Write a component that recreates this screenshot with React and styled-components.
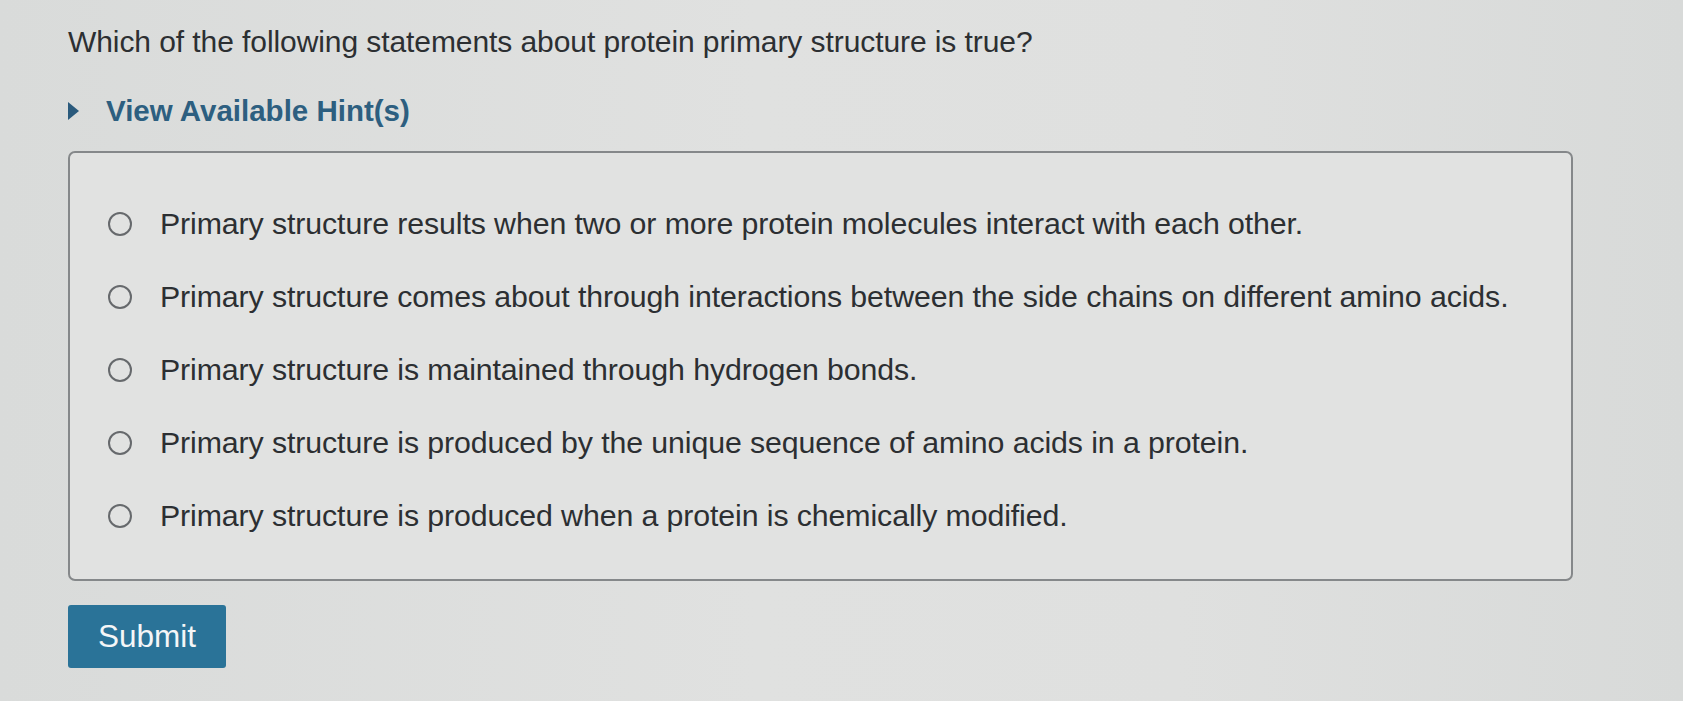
import styled, { createGlobalStyle } from 'styled-components';

const options = [
  'Primary structure results when two or more protein molecules interact with each other.',
  'Primary structure comes about through interactions between the side chains on different amino acids.',
  'Primary structure is maintained through hydrogen bonds.',
  'Primary structure is produced by the unique sequence of amino acids in a protein.',
  'Primary structure is produced when a protein is chemically modified.',
];

const App = () => {
  return (
    <>
      <GlobalStyle />
      <StyledPage>
        <StyledQuestion>
          Which of the following statements about protein primary structure is true?
        </StyledQuestion>
        <StyledHint>
          <span className='arrow' />
          View Available Hint(s)
        </StyledHint>
        <StyledChoices>
          {options.map((text) => (
            <StyledOption key={text}>
              <StyledRadio />
              <span>{text}</span>
            </StyledOption>
          ))}
        </StyledChoices>
        <StyledSubmit>Submit</StyledSubmit>
      </StyledPage>
    </>
  );
};

//styled-components
const GlobalStyle = createGlobalStyle`
  html, body {
    margin: 0;
    padding: 0;
    background: #dcdedd;
  }
  body {
    font-family: 'Liberation Sans', Arial, sans-serif;
    color: #2c2f32;
  }
`;

const StyledPage = styled.div`
  width: 1683px;
  height: 701px;
  box-sizing: border-box;
  padding: 25px 0 0 68px;
  display: flex;
  flex-direction: column;
  align-items: flex-start;
  background: linear-gradient(90deg, #d9dbda 0%, #e0e1e0 45%, #dfe0df 70%, #d8dad9 100%);
`;

const StyledQuestion = styled.div`
  font-size: 30px;
  line-height: 34px;
  letter-spacing: -0.08px;
`;

const StyledHint = styled.div`
  display: flex;
  align-items: center;
  gap: 27px;
  margin-top: 37px;
  font-size: 29.5px;
  line-height: 30px;
  font-weight: bold;
  color: #2d5f80;
  .arrow {
    width: 0;
    height: 0;
    border-top: 9px solid transparent;
    border-bottom: 9px solid transparent;
    border-left: 11px solid #2a5a7c;
  }
`;

const StyledChoices = styled.div`
  margin-top: 25px;
  width: 1505px;
  height: 430px;
  box-sizing: border-box;
  border: 2px solid #85888a;
  border-radius: 7px;
  padding: 52px 0 0 38px;
  display: flex;
  flex-direction: column;
  gap: 35px;
  background: #e1e2e1;
`;

const StyledOption = styled.label`
  display: flex;
  align-items: center;
  gap: 28px;
  font-size: 30.3px;
  line-height: 38px;
  letter-spacing: -0.1px;
`;

const StyledRadio = styled.span`
  width: 20px;
  height: 20px;
  border: 2px solid #66696c;
  border-radius: 50%;
  flex-shrink: 0;
`;

const StyledSubmit = styled.button`
  margin-top: 24px;
  width: 158px;
  height: 63px;
  border: none;
  border-radius: 3px;
  background: #2a7398;
  color: #f4f6f7;
  font-family: 'Liberation Sans', Arial, sans-serif;
  font-size: 31.5px;
  padding: 0;
`;

export default App;
